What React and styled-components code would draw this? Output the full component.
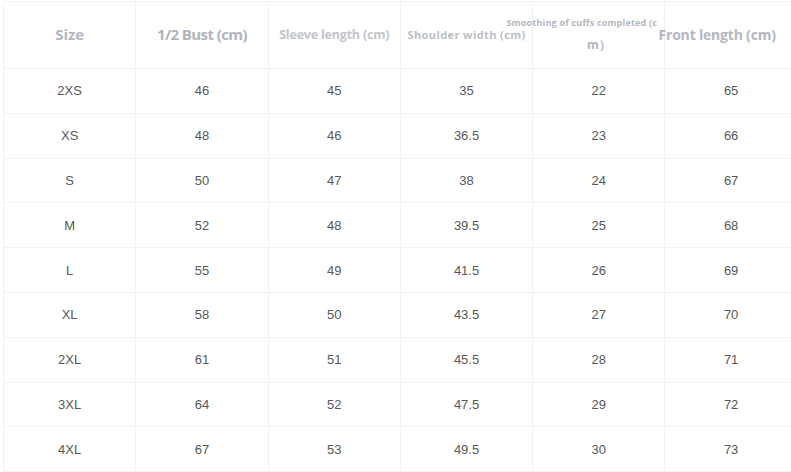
import React from "react";
import styled, {createGlobalStyle} from "styled-components";

const GlobalStyle = createGlobalStyle`
  html, body {
    margin: 0;
    padding: 0;
    background: #fff;
    overflow: hidden;
  }
`

const Page = styled.div`
  width: 791px;
  height: 472px;
  overflow: hidden;
  padding: 1px 0 0 3px;
  box-sizing: border-box;
`

const Table = styled.div`
  display: grid;
  grid-template-columns: repeat(6, 132.3px);
  grid-template-rows: 67px repeat(9, 44.8px);
  width: 794px;
  border-bottom: 1px solid #f1f2f3;
`

const Cell = styled.div`
  display: flex;
  align-items: center;
  justify-content: center;
  border-left: 1px solid #f1f2f3;
  border-top: 1px solid #f1f2f3;
  font-family: "Liberation Sans", Arial, sans-serif;
  font-size: 13px;
  color: #585858;
  overflow: visible;
  white-space: nowrap;
`

const HeadCell = styled(Cell)`
  font-family: "Open Sans", "Noto Sans", sans-serif;
  font-weight: 700;
  color: ${p => p.$color || "#b3b7bf"};
  font-size: ${p => p.$size}px;
  letter-spacing: ${p => p.$spacing || 0}px;
  padding-bottom: 2px;
`

const Shift = styled.span`
  margin-right: ${p => p.$shift || 0}px;
`

const Wrapped = styled.div`
  display: flex;
  flex-direction: column;
  align-items: center;
  gap: 6px;
  line-height: 16px;
`

const FirstLine = styled.span`
  margin-right: 34px;
  letter-spacing: 0.2px;
`

const SecondLine = styled.span`
  font-size: 12px;
  margin-right: 0;
`

const heads = [
    {label: "Size", size: 15},
    {label: "1/2 Bust (cm)", size: 15, spacing: -0.6, color: "#b0b4bc"},
    {label: "Sleeve length (cm)", size: 12.5, color: "#c2c5cb", spacing: -0.2},
    {label: "Shoulder width (cm)", size: 11, spacing: 0.4, color: "#bcc0c6"},
    null,
    {label: "Front length (cm)", size: 14, spacing: -0.2, color: "#b3b7bf", shift: 28},
]

const rows = [
    ["2XS", "46", "45", "35", "22", "65"],
    ["XS", "48", "46", "36.5", "23", "66"],
    ["S", "50", "47", "38", "24", "67"],
    ["M", "52", "48", "39.5", "25", "68"],
    ["L", "55", "49", "41.5", "26", "69"],
    ["XL", "58", "50", "43.5", "27", "70"],
    ["2XL", "61", "51", "45.5", "28", "71"],
    ["3XL", "64", "52", "47.5", "29", "72"],
    ["4XL", "67", "53", "49.5", "30", "73"],
]

const App = () => {
    return (
        <>
            <GlobalStyle/>
            <Page>
                <Table>
                    {heads.map((h, i) => h ? (
                        <HeadCell key={i} $size={h.size} $spacing={h.spacing} $color={h.color}>
                            <Shift $shift={h.shift}>{h.label}</Shift>
                        </HeadCell>
                    ) : (
                        <HeadCell key={i} $size={9} $color="#b3b7bf">
                            <Wrapped>
                                <FirstLine>Smoothing of cuffs completed (c</FirstLine>
                                <SecondLine>m）</SecondLine>
                            </Wrapped>
                        </HeadCell>
                    ))}
                    {rows.map(r => r.map((v, j) => (
                        <Cell key={r[0] + j}>{v}</Cell>
                    )))}
                </Table>
            </Page>
        </>
    )
}

export default App;
